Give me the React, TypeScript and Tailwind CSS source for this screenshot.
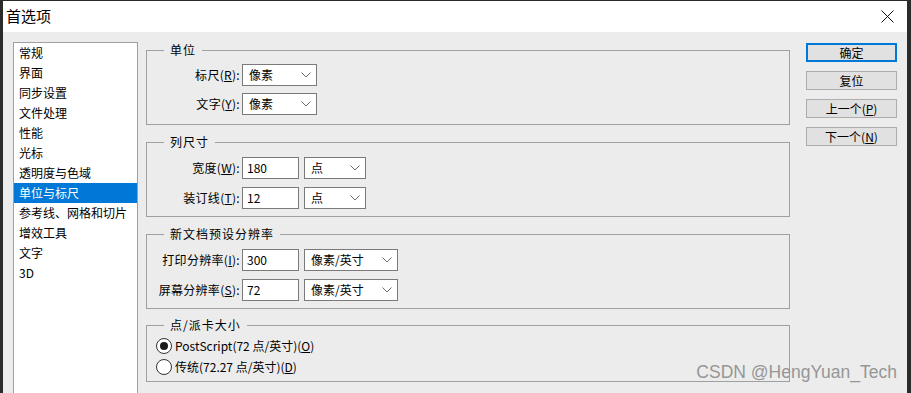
import React from 'react';

const FONT = { fontFamily: '"Noto Sans CJK SC", "Noto Sans", sans-serif' };

const navItems = [
  '常规', '界面', '同步设置', '文件处理', '性能', '光标', '透明度与色域',
  '单位与标尺', '参考线、网格和切片', '增效工具', '文字', '3D',
];

function Chevron() {
  return (
    <svg width="10" height="6" viewBox="0 0 10 6" className="shrink-0">
      <path d="M0.5 0.5 L5 5 L9.5 0.5" fill="none" stroke="#6b6b6b" strokeWidth="1" />
    </svg>
  );
}

function Select({ value, width }: { value: string; width: string }) {
  return (
    <div className={`${width} h-[22px] bg-white border border-[#7a7a7a] flex items-center justify-between pl-[6px] pr-[5px]`}>
      <span>{value}</span>
      <Chevron />
    </div>
  );
}

function Field({ value }: { value: string }) {
  return (
    <div className="w-[57px] h-[22px] bg-white border border-[#7a7a7a] flex items-center pl-[4px]">
      {value}
    </div>
  );
}

function Label({ text, hot }: { text: string; hot: string }) {
  return (
    <span className="w-[93px] text-right shrink-0 tracking-[0.3px]">
      {text}(<span className="underline">{hot}</span>):
    </span>
  );
}

function Group({ title, className, children }: { title: string; className?: string; children: React.ReactNode }) {
  return (
    <fieldset className={`w-[644px] border border-[#a0a0a0] ${className ?? ''}`}>
      <legend className="ml-[17px] px-[6px] leading-[18px] tracking-[1px]">{title}</legend>
      {children}
    </fieldset>
  );
}

function Radio({ checked, children }: { checked?: boolean; children: React.ReactNode }) {
  return (
    <div className="h-[21px] flex items-center pl-[9px] gap-[3px]">
      <span className="w-[16px] h-[16px] rounded-full border border-[#333] bg-white flex items-center justify-center">
        {checked && <span className="w-[8px] h-[8px] rounded-full bg-[#1a1a1a]" />}
      </span>
      <span>{children}</span>
    </div>
  );
}

export default function App() {
  return (
    <div className="w-[911px] h-[393px] overflow-hidden bg-[#2b2b2b] pt-px pl-[3px] pr-[4px] text-[12px] text-black" style={FONT}>
      <div className="h-[420px] bg-[#ececec] relative">
        {/* Title bar */}
        <div className="h-[31px] bg-white flex items-center justify-between pl-[3px] pr-[13px]">
          <span className="text-[15px]">首选项</span>
          <svg width="13" height="13" viewBox="0 0 13 13">
            <path d="M0.5 0.5 L12.5 12.5 M12.5 0.5 L0.5 12.5" stroke="#111" strokeWidth="1" />
          </svg>
        </div>

        <div className="flex items-start pt-[9px] pl-[10px]">
          {/* Category list */}
          <div className="w-[125px] h-[380px] mt-px bg-white border border-[#a0a0a0] shrink-0">
            {navItems.map((item) => (
              <div
                key={item}
                className={`h-[20px] flex items-center pl-[5px] ${item === '单位与标尺' ? 'bg-[#0078d7] text-white' : ''}`}
              >
                {item}
              </div>
            ))}
          </div>

          {/* Settings */}
          <div className="ml-[8px] flex flex-col">
            <Group title="单位">
              <div className="flex flex-col gap-[7px] pt-[5px] pb-[9px]">
                <div className="flex items-center gap-[2px]">
                  <Label text="标尺" hot="R" />
                  <Select value="像素" width="w-[75px]" />
                </div>
                <div className="flex items-center gap-[2px]">
                  <Label text="文字" hot="Y" />
                  <Select value="像素" width="w-[75px]" />
                </div>
              </div>
            </Group>

            <Group title="列尺寸" className="mt-[8px]">
              <div className="flex flex-col gap-[8px] pt-[6px] pb-[7px]">
                <div className="flex items-center gap-[2px]">
                  <Label text="宽度" hot="W" />
                  <Field value="180" />
                  <div className="ml-[3px]"><Select value="点" width="w-[62px]" /></div>
                </div>
                <div className="flex items-center gap-[2px]">
                  <Label text="装订线" hot="T" />
                  <Field value="12" />
                  <div className="ml-[3px]"><Select value="点" width="w-[62px]" /></div>
                </div>
              </div>
            </Group>

            <Group title="新文档预设分辨率" className="mt-[8px]">
              <div className="flex flex-col gap-[8px] pt-[6px] pb-[7px]">
                <div className="flex items-center gap-[2px]">
                  <Label text="打印分辨率" hot="I" />
                  <Field value="300" />
                  <div className="ml-[3px]"><Select value="像素/英寸" width="w-[94px]" /></div>
                </div>
                <div className="flex items-center gap-[2px]">
                  <Label text="屏幕分辨率" hot="S" />
                  <Field value="72" />
                  <div className="ml-[3px]"><Select value="像素/英寸" width="w-[94px]" /></div>
                </div>
              </div>
            </Group>

            <Group title="点/派卡大小" className="mt-[7px]">
              <div className="flex flex-col pt-px pb-[4px]">
                <Radio checked>
                  PostScript(72 点/英寸)(<span className="underline">O</span>)
                </Radio>
                <Radio>
                  传统(72.27 点/英寸)(<span className="underline">D</span>)
                </Radio>
              </div>
            </Group>
          </div>

          {/* Buttons */}
          <div className="ml-[16px] mt-[2px] flex flex-col gap-[9px]">
            <button className="w-[91px] h-[19px] bg-[#e1e1e1] border-2 border-[#0078d7] flex items-center justify-center">确定</button>
            <button className="w-[91px] h-[19px] bg-[#e1e1e1] border border-[#adadad] flex items-center justify-center">复位</button>
            <button className="w-[91px] h-[19px] bg-[#e1e1e1] border border-[#adadad] flex items-center justify-center">
              上一个(<span className="underline">P</span>)
            </button>
            <button className="w-[91px] h-[19px] bg-[#e1e1e1] border border-[#adadad] flex items-center justify-center">
              下一个(<span className="underline">N</span>)
            </button>
          </div>
        </div>

        {/* Watermark */}
        <span
          className="absolute top-[363px] right-[10px] text-[17.5px] leading-none text-[#969696]"
          style={{ fontFamily: '"Liberation Sans", Arial, sans-serif' }}
        >
          CSDN @HengYuan_Tech
        </span>
      </div>
    </div>
  );
}
